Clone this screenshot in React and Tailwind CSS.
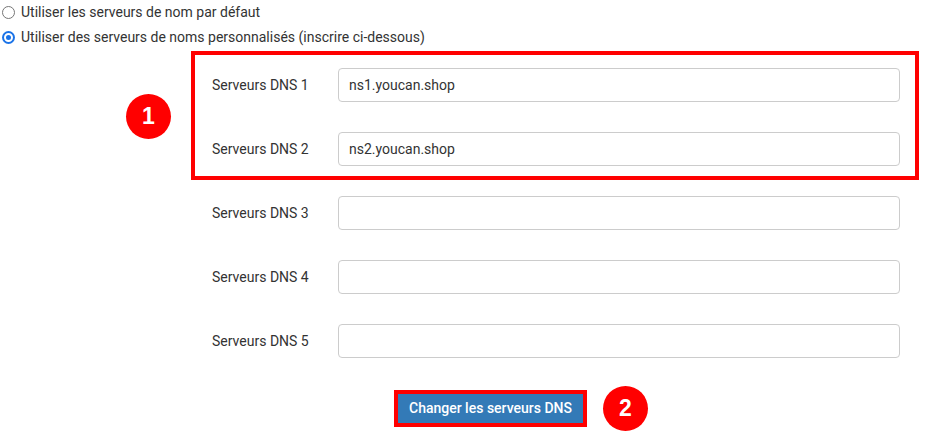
import React from 'react';

const fields = [
  { label: 'Serveurs DNS 1', value: 'ns1.youcan.shop' },
  { label: 'Serveurs DNS 2', value: 'ns2.youcan.shop' },
  { label: 'Serveurs DNS 3', value: '' },
  { label: 'Serveurs DNS 4', value: '' },
  { label: 'Serveurs DNS 5', value: '' },
];

const Radio = ({ checked, children }) => (
  <label className="flex h-[25px] items-center">
    {checked ? (
      <span className="ml-[2px] flex h-[13px] w-[13px] items-center justify-center rounded-full bg-[#1a73e8]">
        <span className="h-[9px] w-[9px] rounded-full border-[2px] border-white bg-[#1a73e8]" />
      </span>
    ) : (
      <span className="ml-[2px] h-[13px] w-[13px] rounded-full border border-[#767676] bg-white" />
    )}
    <span className="ml-[6px] text-[14px] text-[#333]">{children}</span>
  </label>
);

const Badge = ({ n }) => (
  <span className="flex h-[45px] w-[45px] items-center justify-center rounded-full bg-[#ff0000] font-['Liberation_Sans',sans-serif] text-[23px] font-bold leading-none text-white">
    {n}
  </span>
);

const Row = ({ label, value }) => (
  <div className="flex h-[34px] items-center">
    <span className="w-[126px] text-[14px] text-[#333]">{label}</span>
    <input
      readOnly
      value={value}
      className="h-[34px] flex-1 rounded-[4px] border border-[#ccc] bg-white px-[10px] text-[14px] text-[#333] outline-none"
    />
  </div>
);

export default function App() {
  return (
    <div className="h-[445px] w-[935px] bg-white font-['Roboto',sans-serif]">
      <Radio>Utiliser les serveurs de nom par défaut</Radio>
      <Radio checked>Utiliser des serveurs de noms personnalisés (inscrire ci-dessous)</Radio>

      <div className="ml-[191px] mt-px w-[728px]">
        <div className="relative flex flex-col gap-[30px] border-4 border-[#ff0000] pl-[17px] pr-[15px] pb-[10px] pt-[13px]">
          <div className="absolute left-[-69px] top-[39px]">
            <Badge n="1" />
          </div>
          {fields.slice(0, 2).map((f) => (
            <Row key={f.label} {...f} />
          ))}
        </div>
        <div className="mt-[16px] flex flex-col gap-[30px] pl-[21px] pr-[19px]">
          {fields.slice(2).map((f) => (
            <Row key={f.label} {...f} />
          ))}
        </div>
      </div>

      <div className="mt-[28px] flex items-center">
        <div className="ml-[394px] border-4 border-[#ff0000]">
          <button
            type="button"
            className="flex h-[29px] w-[185px] items-center justify-center bg-[#337ab7] text-[14px] font-medium text-white"
          >
            Changer les serveurs DNS
          </button>
        </div>
        <div className="ml-[16px]">
          <Badge n="2" />
        </div>
      </div>
    </div>
  );
}
